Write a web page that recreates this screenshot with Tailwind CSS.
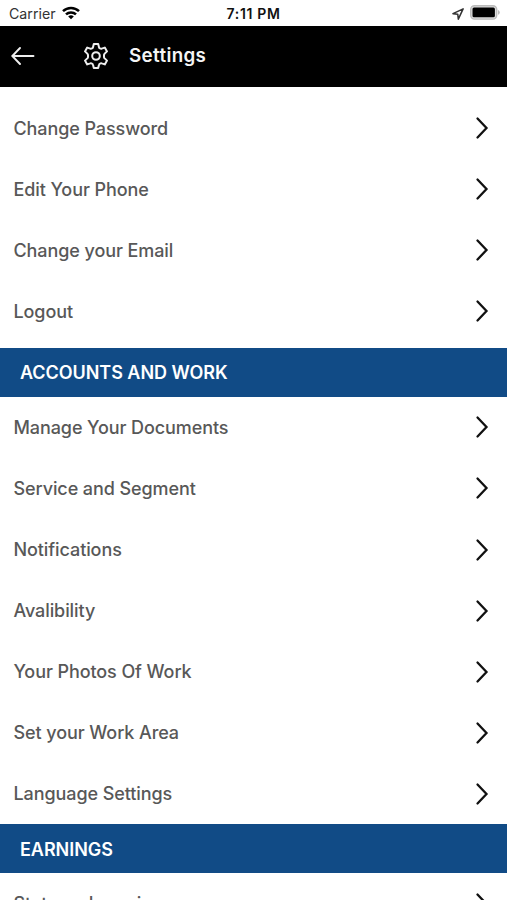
<!DOCTYPE html>
<html lang="en">
<head>
  <meta charset="UTF-8">
  <meta name="viewport" content="width=device-width, initial-scale=1.0">
  <title>Settings</title>
  <script src="https://cdn.jsdelivr.net/npm/@tailwindcss/browser@4"></script>
</head>
<body class="bg-white h-[900px] overflow-hidden font-['Inter',sans-serif] text-[#585858]">
  <!-- Status bar -->
  <div class="h-[25.5px] grid grid-cols-3 items-center text-black">
    <div class="flex items-center gap-[6px] pl-[9px] pt-[2px] text-[14.2px] text-[#333]">
      <span>Carrier</span>
      <svg class="w-[18px] h-[14px] -mt-[2px]" viewBox="0 0 18 14" fill="none" stroke="#000" stroke-width="2.5">
        <path d="M1 5.2a11.6 11.6 0 0 1 16 0"/>
        <path d="M4 8.4a7.2 7.2 0 0 1 10 0"/>
        <path d="M9 13.3L6.2 10.5a4 4 0 0 1 5.6 0z" fill="#000" stroke="none"/>
      </svg>
    </div>
    <span class="text-center pt-[2px] text-[14px] font-semibold tracking-[0.65px] text-[#111]">7:11 PM</span>
    <div class="flex items-center justify-end gap-[6px] pr-[7px]">
      <svg class="w-[12px] h-[12px] mt-[2px]" viewBox="0 0 11 11" fill="none" stroke="#333" stroke-width="1.4" stroke-linejoin="round">
        <path d="M10.2 .8L.9 5.200l4.400.600.500 4.400z"/>
      </svg>
      <svg class="w-[30px] h-[15px]" viewBox="0 0 30 15">
        <rect x=".7" y=".7" width="26" height="13.4" rx="3.8" fill="#ddd" stroke="#bbb" stroke-width="1.4"/>
        <rect x="2.5" y="2.5" width="22.4" height="9.8" rx="1.5" fill="#000"/>
        <path d="M28 5v4.8q1.8-.8 1.8-2.4T28 5z" fill="#bbb"/>
      </svg>
    </div>
  </div>

  <header class="h-[61px] bg-black flex items-center pl-[11px] text-white">
    <svg class="w-[24px] h-[20px]" viewBox="0 0 24 20" fill="none" stroke="#eee" stroke-width="1.9" stroke-linecap="round">
      <path d="M9 2L1.300 10 9 18M1.300 10H22.500"/>
    </svg>
    <!-- Gear -->
    <svg class="w-[26px] h-[26px] ml-[48px]" viewBox="0 0 26 26" fill="none" stroke="#eee" stroke-width="2" stroke-linejoin="round">
      <path d="M10.800 1h4.400l.8 3.200q.2.900 1 1.200.9.500 1.700.2l3.100-1 2.200 3.800-2.300 2.200q-.7.700-.7 1.500v1.800q0 .8.700 1.500l2.300 2.200-2.200 3.800-3.100-1q-.8-.3-1.700.2-.8.300-1 1.200l-.8 3.200h-4.400l-.8-3.200q-.2-.900-1-1.200-.9-.5-1.700-.2l-3.100 1L2 17.600l2.300-2.200q.7-.7.7-1.500v-1.800q0-.8-.7-1.500L2 8.400l2.200-3.800 3.100 1q.8.300 1.700-.2.8-.3 1-1.200z"/>
      <circle cx="13" cy="13" r="3.800"/>
    </svg>
    <h1 class="ml-[20px] pt-[1px] text-[18.8px] font-semibold tracking-[0.35px] text-[#f5f5f5]">Settings</h1>
  </header>

  <ul id="account" class="pt-[11px] pb-[6px]"></ul>
  <h2 class="h-[48.9px] bg-[#114b86] flex items-center pl-[20px] pt-px text-[18px] font-semibold tracking-[-0.05px] text-white">ACCOUNTS AND WORK</h2>
  <ul id="work"></ul>
  <h2 class="h-[48.9px] bg-[#114b86] flex items-center pl-[20px] pt-px text-[18px] font-semibold tracking-[-0.05px] text-white">EARNINGS</h2>
  <ul id="earnings"></ul>

  <script>
    const lists = {
      account: ['Change Password', 'Edit Your Phone', 'Change your Email', 'Logout'],
      work: ['Manage Your Documents', 'Service and Segment', 'Notifications', 'Avalibility', 'Your Photos Of Work', 'Set your Work Area', 'Language Settings'],
      earnings: ['Stats and earnings'],
    };
    for (const id in lists) {
      document.getElementById(id).innerHTML = lists[id].map(label => `
        <li class="h-[61.1px] flex items-center justify-between pl-[13.5px] pr-[18px] text-[18px] font-medium tracking-[-0.09px]">
          <span>${label}</span>
          <svg class="w-[15px] h-[24px]" viewBox="0 0 15 24" fill="none" stroke="#111" stroke-width="2.3" stroke-linecap="round">
            <path d="M3.500 2.500l9 9.500-9 9.500"/>
          </svg>
        </li>`).join('');
    }
  </script>
</body>
</html>
